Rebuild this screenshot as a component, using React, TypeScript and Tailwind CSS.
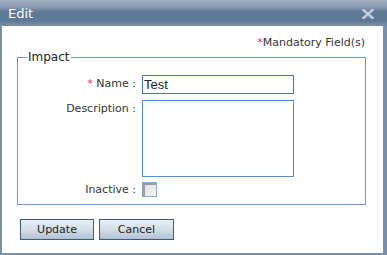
import { useState } from 'react';

export default function App() {
  const [name, setName] = useState('Test');
  const [desc, setDesc] = useState('');
  const [inactive, setInactive] = useState(false);

  return (
    <div className="w-[387px] h-[255px] flex flex-col font-['DejaVu_Sans',Verdana,sans-serif] text-[11px] text-[#333]">
      {/* 타이틀 바 */}
      <div className="h-[26px] flex items-center justify-between pl-[8px] pr-[13px] bg-[linear-gradient(to_bottom,#a3b3c5_0%,#8799b0_28%,#5f7a96_45%,#5e7995_80%,#7a90a8_100%)]">
        <span className="text-white text-[13px] leading-none">Edit</span>
        <svg width="12" height="10" viewBox="0 0 12 10" className="mt-[1px]">
          <path d="M1.5 1 L10.5 9 M10.5 1 L1.5 9" stroke="#c3ccd7" strokeWidth="2.6" strokeLinecap="square" />
        </svg>
      </div>

      {/* 본문 */}
      <div className="flex-1 bg-white border-l-2 border-r-4 border-b-2 border-[#7890aa] flex flex-col">
        <div className="pt-[10px] pr-[18px] text-right leading-[14px]">
          <span className="text-[#e3303c]">*</span>Mandatory Field(s)
        </div>

        <fieldset className="ml-[15px] mr-[17px] border border-[#6b97d3] pb-[5px] pt-[11px]">
          <legend className="ml-[9px] px-[1px] text-[12px] leading-[14px] text-[#222]">Impact</legend>
          <div className="grid grid-cols-[118px_152px] gap-x-[6px]">
            <label className="self-center text-right">
              <span className="text-[#e3303c]">*</span> Name :
            </label>
            <input
              value={name}
              onChange={(e) => setName(e.target.value)}
              className="h-[19px] border border-[#4c72ab] px-[1px] font-['Liberation_Sans',Arial,sans-serif] text-[13px] text-[#222] outline-none"
            />

            <label className="mt-[6px] pt-[1px] text-right">Description :</label>
            <textarea
              value={desc}
              onChange={(e) => setDesc(e.target.value)}
              className="mt-[6px] h-[77px] border border-[#5a8ed4] resize-none outline-none font-['Liberation_Sans',Arial,sans-serif] text-[13px]"
            />

            <label className="mt-[5px] self-center text-right">Inactive :</label>
            <button
              onClick={() => setInactive(!inactive)}
              className="mt-[5px] w-[15px] h-[15px] border border-[#8aa6cd] bg-[linear-gradient(135deg,#dcdcdc,#f7f7f7)] shadow-[inset_2px_2px_0_#9c9c9c] flex items-center justify-center"
            >
              {inactive && <span className="text-[10px] leading-none text-[#222]">✓</span>}
            </button>
          </div>
        </fieldset>

        <div className="flex gap-[5px] ml-[18px] mt-[14px]">
          <button className="w-[74px] h-[21px] border border-[#3e5d7c] bg-[linear-gradient(to_bottom,#e9eff5_0%,#d3dee8_50%,#b1c3d3_100%)] text-[#222] leading-none">
            Update
          </button>
          <button className="w-[75px] h-[21px] border border-[#3e5d7c] bg-[linear-gradient(to_bottom,#e9eff5_0%,#d3dee8_50%,#b1c3d3_100%)] text-[#222] leading-none">
            Cancel
          </button>
        </div>
      </div>
    </div>
  );
}
